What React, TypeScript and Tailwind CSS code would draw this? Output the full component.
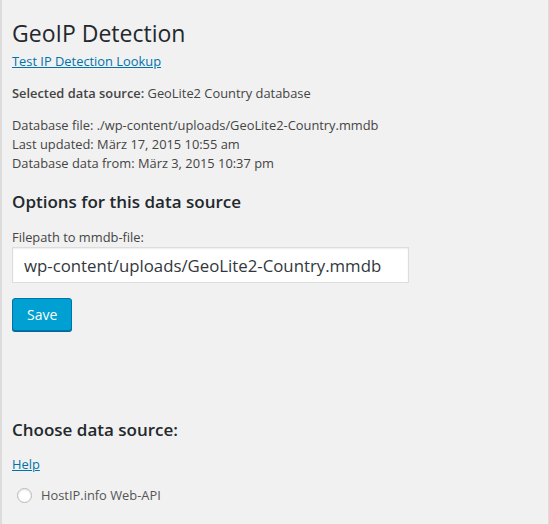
export default function App() {
  return (
    <div className="min-h-[524px] w-[549px] border-l-2 border-r border-l-[#dcdcdc] border-r-[#dcdcdc] bg-[#f1f1f1] pl-[10px] pt-[18px] font-['Open_Sans',sans-serif] text-[12.86px] leading-[19px] text-[#444]">
      <h1 className="text-[23px] leading-[30px] font-normal text-[#23282d]">GeoIP Detection</h1>
      <a href="#" className="mt-[4px] inline-block text-[#0073aa] underline">
        Test IP Detection Lookup
      </a>

      <p className="mt-[13px]">
        <b className="font-semibold">Selected data source:</b> GeoLite2 Country database
      </p>

      <p className="mt-[13px]">
        Database file: ./wp-content/uploads/GeoLite2-Country.mmdb
        <br />
        Last updated: März 17, 2015 10:55 am
        <br />
        Database data from: März 3, 2015 10:37 pm
      </p>

      <h3 className="mt-[17px] text-[17px] leading-[24px] font-semibold text-[#23282d]">
        Options for this data source
      </h3>

      <label className="mt-[14px] block">Filepath to mmdb-file:</label>
      <input
        type="text"
        defaultValue="wp-content/uploads/GeoLite2-Country.mmdb"
        className="block h-[36px] w-[397px] border border-[#ddd] bg-white px-[11px] text-[16.8px] text-[#32373c] shadow-[inset_0_1px_2px_rgba(0,0,0,0.07)] outline-none"
      />

      <button className="mt-[15px] h-[33px] rounded-[3px] border border-[#0073aa] bg-[#00a0d2] px-[14px] text-[14px] text-white shadow-[0_1px_0_#006799]">
        Save
      </button>

      <h3 className="mt-[87px] text-[17px] leading-[24px] font-semibold text-[#23282d]">
        Choose data source:
      </h3>
      <a href="#" className="mt-[13px] inline-block text-[#0073aa] underline">
        Help
      </a>
      <label className="mt-[12px] flex items-center gap-[9px] pl-[5px] text-[#555]">
        <span className="h-[15px] w-[15px] rounded-full border border-[#b4b9be] bg-white shadow-[inset_0_1px_2px_rgba(0,0,0,0.1)]" />
        <span>HostIP.info Web-API</span>
      </label>
    </div>
  );
}
